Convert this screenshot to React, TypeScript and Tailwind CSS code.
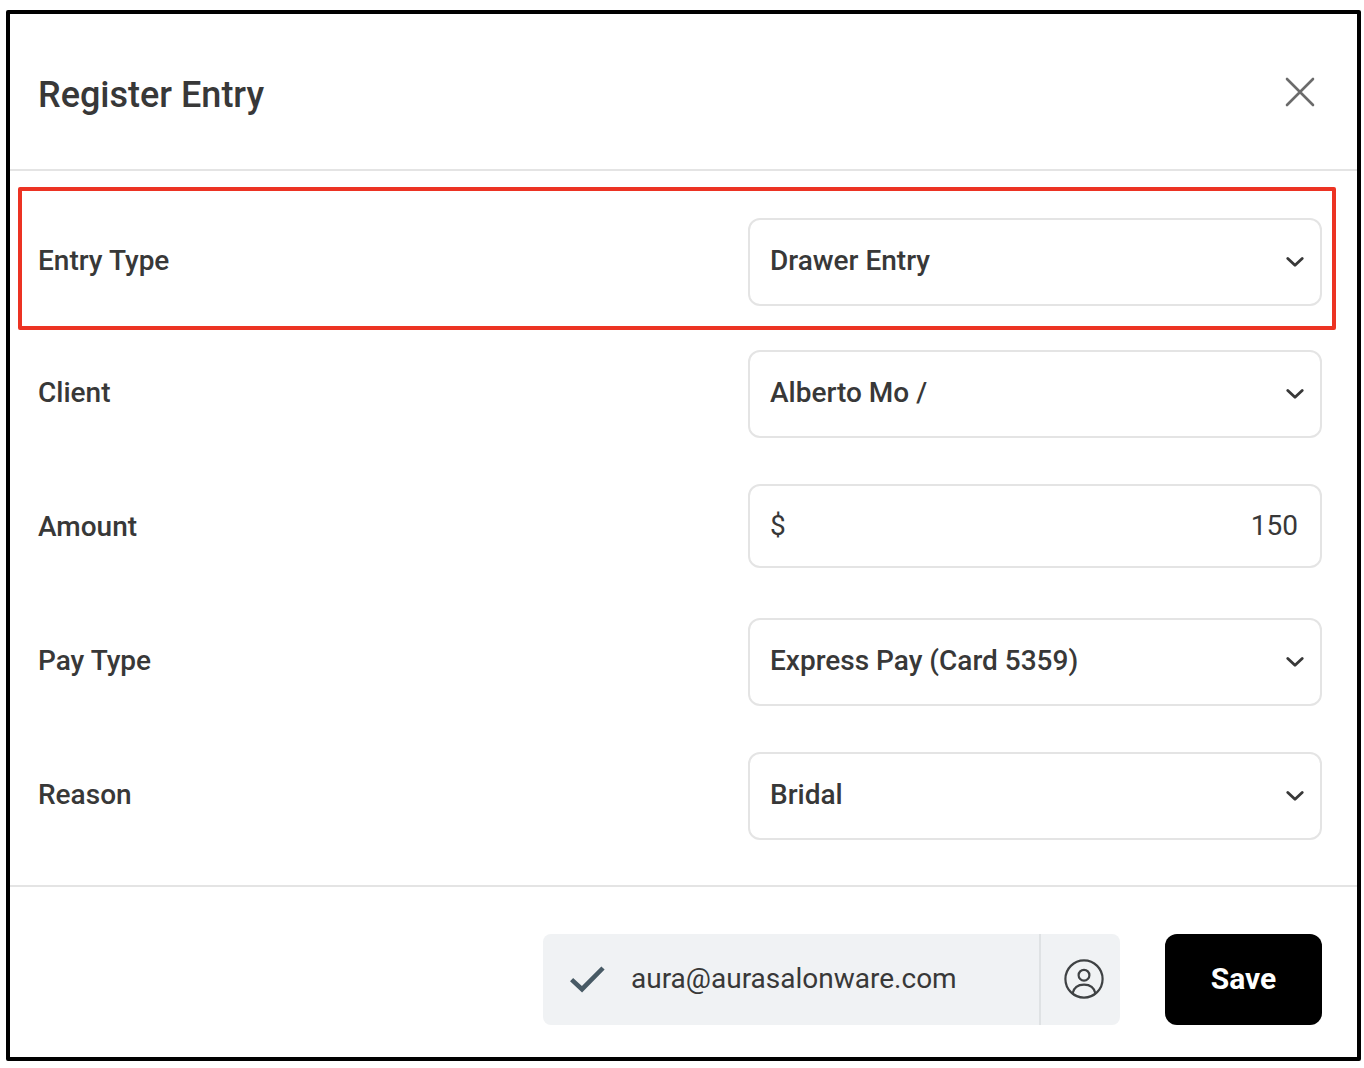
import React, { useState } from "react";

const selects = {
  entryType: ["Drawer Entry", "Petty Cash"],
  client: ["Alberto Mo /"],
  payType: ["Express Pay (Card 5359)", "Cash"],
  reason: ["Bridal", "Other"],
};

function CloseIcon() {
  return (
    <svg viewBox="0 0 30 30" className="w-[30px] h-[30px]" fill="none" stroke="#6b6b6b" strokeWidth="2.6" strokeLinecap="round" aria-hidden="true">
      <path d="M2 2L28 28M28 2L2 28" />
    </svg>
  );
}

function ChevronIcon() {
  return (
    <svg viewBox="0 0 18 12" className="pointer-events-none absolute right-[18px] top-1/2 -translate-y-1/2 w-[18px] h-3" fill="none" stroke="#383838" strokeWidth="2.8" strokeLinecap="round" strokeLinejoin="round" aria-hidden="true">
      <path d="M1.8 2.4L9 9.2L16.2 2.4" />
    </svg>
  );
}

function CheckIcon() {
  return (
    <svg viewBox="0 0 36 28" className="w-9 h-7" fill="none" stroke="#485a65" strokeWidth="4.6" aria-hidden="true">
      <path d="M2.6 14.6L13 24.2L34 3" />
    </svg>
  );
}

function UserCircleIcon() {
  return (
    <svg viewBox="0 0 40 40" className="w-10 h-10" fill="none" stroke="#3f4244" strokeWidth="2.2" strokeLinecap="round" aria-hidden="true">
      <circle cx="20" cy="20" r="18.6" />
      <circle cx="20" cy="16.2" r="5.4" />
      <path d="M8.6 34.4C9.8 28.6 14.2 25.6 20 25.6C25.8 25.6 30.2 28.6 31.4 34.4" />
    </svg>
  );
}

function Row({ id, label, children }: { id: string; label: string; children: React.ReactNode }) {
  return (
    <div className="grid grid-cols-[355fr_287fr] items-start min-h-22">
      <label htmlFor={id} className="text-[28px] leading-[86px] font-medium">
        {label}
      </label>
      {children}
    </div>
  );
}

function SelectField({ id, options }: { id: string; options: string[] }) {
  return (
    <div className="relative">
      <select
        id={id}
        className="block w-full h-22 appearance-none rounded-xl border-2 border-[#e4e4e4] bg-white pl-5 pr-12 pb-0.5 text-[28px] font-medium text-[#383838]"
      >
        {options.map((o) => (
          <option key={o}>{o}</option>
        ))}
      </select>
      <ChevronIcon />
    </div>
  );
}

export default function App() {
  const [amount, setAmount] = useState("150");

  return (
    <main className="bg-white pt-[10px] pl-[6px] pr-[3px] pb-[7px] font-['Roboto',sans-serif] text-[#383838]">
      <form className="rounded-xs border-4 border-black" onSubmit={(e) => e.preventDefault()}>
        <header className="flex items-center justify-between border-b-2 border-[#e4e4e4] pl-7 pr-[42px] pt-[51px] pb-[50px]">
          <h1 className="pt-1.5 text-4xl leading-12 font-medium">Register Entry</h1>
          <button type="button" aria-label="Close">
            <CloseIcon />
          </button>
        </header>

        <div className="pt-4 pb-[45px]">
          <div className="ml-2 mr-[21px] rounded-xs border-4 border-[#ec3323] pl-4 pr-[10px] pt-[27px] pb-5">
            <Row id="entry-type" label="Entry Type">
              <SelectField id="entry-type" options={selects.entryType} />
            </Row>
          </div>

          <div className="mt-5 flex flex-col gap-[46px] pl-7 pr-[35px]">
            <Row id="client" label="Client">
              <SelectField id="client" options={selects.client} />
            </Row>
            <Row id="amount" label="Amount">
              <div className="flex items-center rounded-xl border-2 border-[#e4e4e4] pl-5 pr-[22px] h-21 text-[28px]">
                <span>$</span>
                <input
                  id="amount"
                  type="text"
                  inputMode="decimal"
                  value={amount}
                  onChange={(e) => setAmount(e.target.value)}
                  className="min-w-0 flex-1 bg-transparent text-right outline-none"
                />
              </div>
            </Row>
            <Row id="pay-type" label="Pay Type">
              <SelectField id="pay-type" options={selects.payType} />
            </Row>
            <Row id="reason" label="Reason">
              <SelectField id="reason" options={selects.reason} />
            </Row>
          </div>
        </div>

        <footer className="flex items-stretch justify-end gap-[45px] border-t-2 border-[#e4e4e4] pr-[35px] pt-[47px] pb-8">
          <div className="flex h-[91px] overflow-hidden rounded-lg bg-[#f0f2f4]">
            <div className="flex w-[496px] items-center gap-[26px] pl-[26px] pb-0.5 text-[28px]">
              <CheckIcon />
              <span>aura@aurasalonware.com</span>
            </div>
            <button type="button" aria-label="Switch user" className="flex w-[81px] items-center justify-center border-l-2 border-[#dfe2e4] pl-1.5 pb-0.5">
              <UserCircleIcon />
            </button>
          </div>
          <button type="submit" className="w-[157px] rounded-xl bg-black pb-0.5 text-3xl font-bold text-white">
            Save
          </button>
        </footer>
      </form>
    </main>
  );
}
